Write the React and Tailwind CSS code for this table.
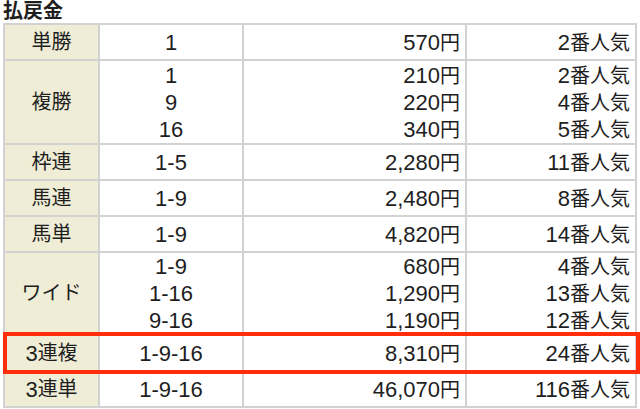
import React from "react";

const rows = [
  { h: "h-[36px]", label: "単勝", nums: ["1"], pay: ["570円"], pop: ["2番人気"] },
  { h: "h-[84px]", label: "複勝", nums: ["1", "9", "16"], pay: ["210円", "220円", "340円"], pop: ["2番人気", "4番人気", "5番人気"] },
  { h: "h-[36px]", label: "枠連", nums: ["1-5"], pay: ["2,280円"], pop: ["11番人気"] },
  { h: "h-[36px]", label: "馬連", nums: ["1-9"], pay: ["2,480円"], pop: ["8番人気"] },
  { h: "h-[36px]", label: "馬単", nums: ["1-9"], pay: ["4,820円"], pop: ["14番人気"] },
  { h: "h-[82px]", label: "ワイド", nums: ["1-9", "1-16", "9-16"], pay: ["680円", "1,290円", "1,190円"], pop: ["4番人気", "13番人気", "12番人気"] },
  { h: "h-[38px]", label: "3連複", nums: ["1-9-16"], pay: ["8,310円"], pop: ["24番人気"], hl: true },
  { h: "h-[35px]", label: "3連単", nums: ["1-9-16"], pay: ["46,070円"], pop: ["116番人気"] },
];

function Mixed({ text }) {
  const parts = text.match(/[\x00-\x7f]+|[^\x00-\x7f]+/g) || [];
  return (
    <>
      {parts.map((p, i) =>
        /^[\x00-\x7f]/.test(p) ? (
          <span key={i} className="text-[22px]">{p}</span>
        ) : (
          <span key={i} className="text-[20px]">{p}</span>
        )
      )}
    </>
  );
}

function Lines({ items, align }) {
  return (
    <div className={`flex flex-col justify-center h-full ${align}`}>
      {items.map((t, i) => (
        <div key={i} className="leading-[27px] h-[27px] whitespace-nowrap">
          <Mixed text={t} />
        </div>
      ))}
    </div>
  );
}

export default function App() {
  return (
    <div
      className="w-[640px] h-[409px] bg-white text-[#1e1e1e] overflow-hidden"
      style={{ fontFamily: '"Liberation Sans", "Noto Sans CJK JP", sans-serif' }}
    >
      <div className="h-[23px] pl-[3px] text-[20px] font-bold leading-[22px]">払戻金</div>
      <div className="ml-[3px] w-[634px] border-t-2 border-l-2 border-[#d2d2d2] text-[20px]">
        {rows.map((r, i) => (
          <div
            key={i}
            className={`grid grid-cols-[95px_144px_223px_170px] ${r.h} ${r.hl ? "relative" : ""}`}
          >
            <div className="bg-[#efedd6] border-r-2 border-b-2 border-[#d2d2d2] flex items-center justify-center leading-[27px] whitespace-nowrap">
              <Mixed text={r.label} />
            </div>
            <div className="border-r-2 border-b-2 border-[#d2d2d2]">
              <Lines items={r.nums} align="items-center" />
            </div>
            <div className="border-r-2 border-b-2 border-[#d2d2d2] pr-[5px]">
              <Lines items={r.pay} align="items-end" />
            </div>
            <div className="border-r-2 border-b-2 border-[#d2d2d2] pr-[5px]">
              <Lines items={r.pop} align="items-end" />
            </div>
            {r.hl && (
              <div className="absolute left-[-2px] right-[-3px] top-[-3px] bottom-[-1px] border-[4px] border-[#ff2d0a] pointer-events-none" />
            )}
          </div>
        ))}
      </div>
    </div>
  );
}
